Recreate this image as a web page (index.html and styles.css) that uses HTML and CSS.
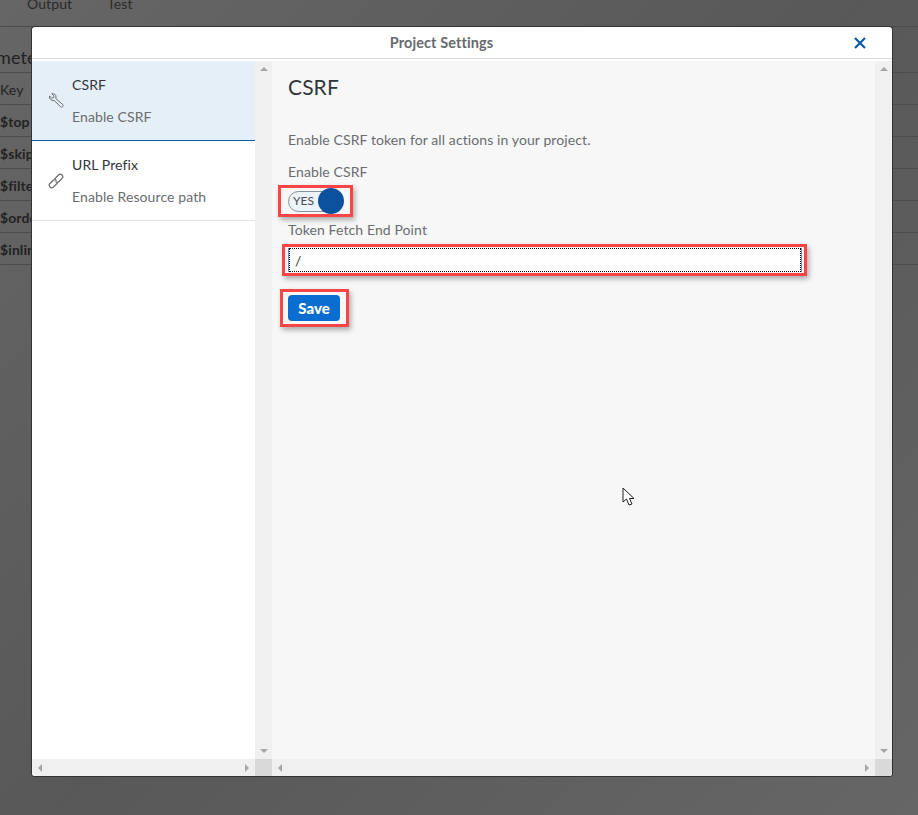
FILE: index.html
```html
<!DOCTYPE html>
<html lang="en">
<head>
    <meta charset="UTF-8">
    <meta name="viewport" content="width=device-width, initial-scale=1.0">
    <title>Project Settings</title>
    <link rel="stylesheet" href="styles.css">
</head>
<body>

    <!-- Page behind the dialog -->
    <div class="page">
        <div class="tabs">
            <span class="tab">Output</span>
            <span class="tab">Test</span>
        </div>
        <div class="page-title">mete</div>
        <div class="param-row">Key</div>
        <div class="param-row param-name">$top</div>
        <div class="param-row param-name">$skip</div>
        <div class="param-row param-name">$filter</div>
        <div class="param-row param-name">$orderby</div>
        <div class="param-row param-name">$inlinecount</div>
    </div>

    <!-- Dialog -->
    <div class="dialog">
        <div class="dialog-header">
            <span class="dialog-title">Project Settings</span>
            <svg class="close-icon" width="14" height="14" viewBox="0 0 14 14">
                <path d="M2 2 L12 12 M12 2 L2 12" stroke="#0a5aa8" stroke-width="2.2" fill="none"/>
            </svg>
        </div>
        <div class="dialog-body">
            <aside class="side">
                <div class="side-list">
                    <div class="side-item active">
                        <svg class="side-icon" width="16" height="16" viewBox="0 0 16 16">
                            <path d="M1.500 3 L3.800 5.200 L5.600 4.600 L6 2.800 L3.800 0.800 C6 0.200 8.200 1.600 8 4.200 L7.800 5.600 L14.800 11.600 C15.500 12.500 15.200 13.400 14.400 13.900 C13.700 14.300 13 14.200 12.400 13.600 L6 7.400 C3.400 7.900 0.900 5.800 1.500 3 Z" fill="none" stroke="#6a6d70" stroke-width="1"/>
                        </svg>
                        <div>
                            <div class="side-title">CSRF</div>
                            <div class="side-sub">Enable CSRF</div>
                        </div>
                    </div>
                    <div class="side-item">
                        <svg class="side-icon" width="16" height="16" viewBox="0 0 16 16">
                            <path d="M6.500 6 L10.500 2 C11.500 1 13 1 14 2 C15 3 15 4.500 14 5.500 L11 8.500 C10 9.500 8.500 9.500 7.500 8.500" fill="none" stroke="#6a6d70" stroke-width="1.200"/>
                            <path d="M9.500 10 L5.500 14 C4.500 15 3 15 2 14 C1 13 1 11.500 2 10.500 L5 7.500 C6 6.500 7.500 6.500 8.500 7.500" fill="none" stroke="#6a6d70" stroke-width="1.200"/>
                        </svg>
                        <div>
                            <div class="side-title">URL Prefix</div>
                            <div class="side-sub">Enable Resource path</div>
                        </div>
                    </div>
                </div>
                <div class="vbar">
                    <span class="arrow up"></span>
                    <span class="arrow down"></span>
                </div>
                <div class="hbar">
                    <span class="arrow left"></span>
                    <span class="arrow right"></span>
                </div>
                <div class="corner"></div>
            </aside>
            <main class="content">
                <div class="form">
                    <h2 class="form-title">CSRF</h2>
                    <p class="form-desc">Enable CSRF token for all actions in your project.</p>
                    <div class="form-label">Enable CSRF</div>
                    <div class="mark mark-switch">
                        <div class="switch">
                            <span class="switch-text">YES</span>
                            <span class="switch-knob"></span>
                        </div>
                    </div>
                    <div class="form-label label-token">Token Fetch End Point</div>
                    <div class="mark mark-input">
                        <input class="text-input" type="text" value="/">
                    </div>
                    <div class="mark mark-save">
                        <button class="save-btn">Save</button>
                    </div>
                </div>
                <div class="vbar">
                    <span class="arrow up"></span>
                    <span class="arrow down"></span>
                </div>
                <div class="hbar">
                    <span class="arrow left"></span>
                    <span class="arrow right"></span>
                </div>
                <div class="corner"></div>
            </main>
        </div>
    </div>

    <!-- Mouse pointer caught in the screenshot -->
    <svg class="cursor" width="14" height="20" viewBox="0 0 14 20">
        <path d="M1 1 L1 15 L4.500 12 L7 18 L10 17 L7.500 11.500 L12 11.500 Z" fill="#fff" stroke="#222" stroke-width="1"/>
    </svg>

</body>
</html>
```

FILE: styles.css
```css
html, body {
    height: 100%;
}
body {
    margin: 0;
    overflow: hidden;
    font-family: Lato, "Open Sans", sans-serif;
    font-size: 14px;
    letter-spacing: 0.1px;
    background: linear-gradient(135deg, #666 0%, #585858 50%, #666 100%);
    color: #32363a;
}

/* page behind the dialog */
.page {
    color: #222;
}
.tabs {
    display: flex;
    gap: 35px;
    height: 26px;
    padding-left: 27px;
    border-bottom: 1px solid #4c4c4c;
    line-height: 8px;
    color: #2a2a2a;
}
.page-title {
    height: 46px;
    font-size: 18px;
    line-height: 60px;
    text-indent: -4px;
    border-bottom: 1px solid #4c4c4c;
    box-sizing: border-box;
}
.param-row {
    height: 32px;
    line-height: 34px;
    border-bottom: 1px solid #4c4c4c;
    box-sizing: border-box;
}
.param-name {
    font-weight: bold;
}

/* dialog */
.dialog {
    position: absolute;
    left: 32px;
    top: 27px;
    width: 860px;
    height: 749px;
    display: flex;
    flex-direction: column;
    background: #fff;
    border-radius: 3px;
    box-shadow: 0 0 0 1px #333;
    overflow: hidden;
}
.dialog-header {
    position: relative;
    height: 31px;
    flex-shrink: 0;
    display: flex;
    align-items: center;
    justify-content: center;
    padding-right: 41px;
    border-bottom: 1px solid #d9d9d9;
}
.dialog-title {
    font-weight: bold;
    font-size: 14.5px;
    color: #666a6e;
}
.close-icon {
    position: absolute;
    right: 25px;
    top: 9px;
}
.dialog-body {
    flex: 1;
    display: flex;
    min-height: 0;
    padding-top: 2px;
}

/* left side */
.side {
    width: 240px;
    display: grid;
    grid-template-columns: 223px 17px;
    grid-template-rows: 1fr 17px;
}
.side-list {
    min-width: 0;
}
.side-item {
    display: flex;
    align-items: center;
    gap: 8px;
    height: 80px;
    padding-left: 16px;
    box-sizing: border-box;
    border-bottom: 1px solid #e5e5e5;
}
.side-item.active {
    background: #e5eff8;
    border-bottom: 1px solid #0a5aa8;
}
.side-icon {
    flex-shrink: 0;
}
.side-title {
    color: #32363a;
    line-height: 20px;
    margin-bottom: 12px;
}
.side-sub {
    color: #6a6d70;
    line-height: 20px;
}

/* scroll bars */
.vbar {
    background: #f0f0f0;
    display: flex;
    flex-direction: column;
    justify-content: space-between;
    align-items: center;
    padding: 6px 0;
}
.hbar {
    background: #f0f0f0;
    display: flex;
    justify-content: space-between;
    align-items: center;
    padding: 0 6px;
}
.corner {
    background: #d9d9d9;
}
.arrow {
    width: 0;
    height: 0;
    border: 4px solid transparent;
}
.arrow.up {
    border-top: 0;
    border-bottom: 4px solid #a6a6a6;
}
.arrow.down {
    border-bottom: 0;
    border-top: 4px solid #a6a6a6;
}
.arrow.left {
    border-left: 0;
    border-right: 4px solid #a6a6a6;
}
.arrow.right {
    border-right: 0;
    border-left: 4px solid #a6a6a6;
}

/* right side */
.content {
    flex: 1;
    display: grid;
    grid-template-columns: 603px 17px;
    grid-template-rows: 1fr 17px;
    background: #f7f7f7;
}
.form {
    padding: 0 16px;
    min-width: 0;
}
.form-title {
    margin: 13px 0 0;
    font-size: 21px;
    font-weight: normal;
    line-height: 26px;
    color: #32363a;
}
.form-desc {
    margin: 30px 0 0;
    line-height: 20px;
    color: #6a6d70;
}
.form-label {
    margin-top: 12px;
    line-height: 20px;
    color: #6a6d70;
}
.label-token {
    margin-top: 3px;
}

/* red marks added to the screenshot */
.mark {
    box-sizing: border-box;
    width: fit-content;
    border: 3px solid #f94545;
    box-shadow: 2px 3px 5px rgba(0, 0, 0, 0.3);
}
.mark-switch {
    margin: 3px 0 0 -10px;
    height: 32px;
    width: 75px;
    padding: 0 0 0 7px;
}
.mark-input {
    margin: 4px 0 0 -6px;
    width: 525px;
    height: 32px;
    padding: 1px 3px 0 4px;
}
.mark-save {
    margin: 13px 0 0 -8px;
    width: 69px;
    height: 38px;
    padding: 3px 5px;
}

.switch {
    position: relative;
    box-sizing: border-box;
    width: 52px;
    height: 21px;
    margin-top: 3px;
    border: 1px solid #8a9099;
    border-radius: 11px;
    background: #edf3fa;
}
.switch-text {
    position: absolute;
    left: 4px;
    top: 0;
    font-size: 12px;
    line-height: 18px;
    color: #4a4d50;
}
.switch-knob {
    position: absolute;
    right: -5px;
    top: -4px;
    width: 26px;
    height: 26px;
    border-radius: 50%;
    background: #0b519e;
}
.text-input {
    box-sizing: border-box;
    display: block;
    width: 100%;
    height: 24px;
    padding: 0 5px;
    border: 1px dotted #000;
    outline: none;
    box-shadow: -1px 0 0 #5f93c7, 1px 0 0 #5f93c7;
    background: #fff;
    font-family: inherit;
    font-size: 14px;
    color: #32363a;
}
.save-btn {
    display: block;
    width: 52px;
    height: 26px;
    margin-top: 0;
    padding: 0;
    border: none;
    border-radius: 4px;
    background: #0a6ed1;
    color: #fff;
    font-family: inherit;
    font-size: 15px;
    font-weight: 900;
}

.cursor {
    position: absolute;
    left: 622px;
    top: 487px;
}
```
